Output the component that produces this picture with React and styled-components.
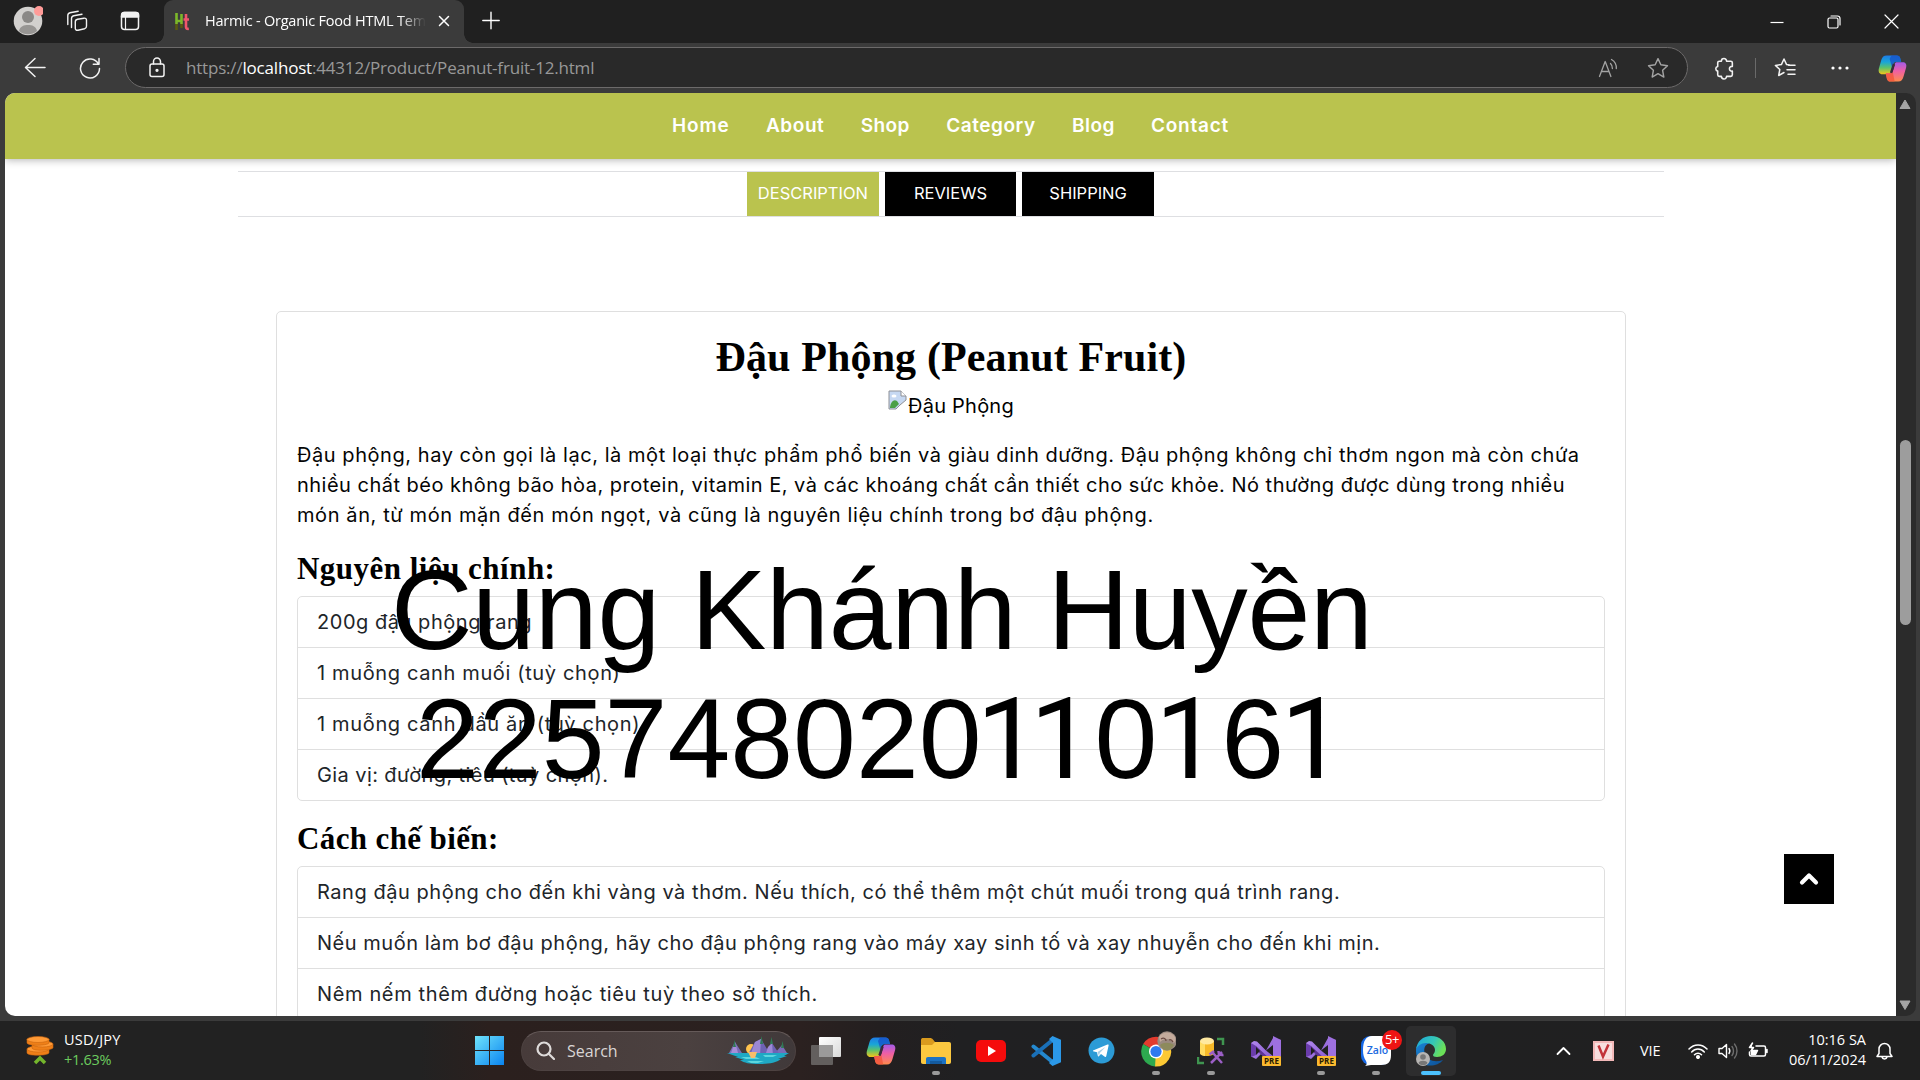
import React from "react";
import styled, { createGlobalStyle } from "styled-components";

const UI = `"Open Sans", "Noto Sans", sans-serif`;
const BODY = `Inter, "Open Sans", sans-serif`;
const HEAD = `"Liberation Serif", serif`;
const GREEN = "#bac34e";

const Global = createGlobalStyle`
  * { box-sizing: border-box; }
  html, body { margin: 0; padding: 0; overflow: hidden; background: #202020; }
  svg { display: block; flex: none; }
`;

const Screen = styled.div`
  width: 1920px;
  height: 1080px;
  display: flex;
  flex-direction: column;
  background: #3b3b3b;
  position: relative;
  overflow: hidden;
`;

/* ---------- browser chrome ---------- */
const TabStrip = styled.div`
  height: 43px;
  flex: none;
  display: flex;
  background: #202020;
  align-items: stretch;
`;
const StripTools = styled.div`
  width: 164px;
  display: flex;
  align-items: center;
  padding: 0 0 2px 13px;
`;
const Spacer = styled.div`
  width: ${(p) => p.$w}px;
  flex: none;
`;
const Grow = styled.div`
  flex: 1;
`;
const BrowserTab = styled.div`
  width: 300px;
  background: #3b3b3b;
  border-radius: 9px 9px 0 0;
  display: flex;
  align-items: center;
  padding: 0 0 1px 11px;
  position: relative;
  &::before, &::after {
    content: "";
    position: absolute;
    bottom: 0;
    width: 9px;
    height: 9px;
  }
  &::before { left: -9px; background: radial-gradient(circle at 0 0, #202020 8.5px, #3b3b3b 9px); }
  &::after { right: -9px; background: radial-gradient(circle at 100% 0, #202020 8.5px, #3b3b3b 9px); }
`;
const TabTitle = styled.div`
  width: 221px;
  margin: 0 12px 0 15px;
  overflow: hidden;
  white-space: nowrap;
  color: #fff;
  font: 14.5px/20px ${UI};
  letter-spacing: -0.22px;
  mask-image: linear-gradient(90deg, #000 88%, transparent 100%);
`;
const WindowButtons = styled.div`
  display: flex;
  align-items: center;
  padding-right: 21px;
  gap: 43px;
`;
const Toolbar = styled.div`
  height: 50px;
  flex: none;
  display: flex;
  align-items: center;
  padding-left: 24px;
`;
const AddressBar = styled.div`
  width: 1563px;
  height: 41px;
  margin-left: 24px;
  margin-top: -1px;
  border: 1px solid #6c6a6a;
  border-radius: 21px;
  background: #292929;
  display: flex;
  align-items: center;
  padding: 0 18px 0 22px;
`;
const Url = styled.div`
  margin-left: 20px;
  color: #989898;
  font: 17px/24px ${UI};
  letter-spacing: -0.19px;
  white-space: nowrap;
  b { color: #fff; font-weight: 400; }
`;
const ToolDivider = styled.div`
  width: 1px;
  height: 20px;
  background: #6a6a6a;
`;

/* ---------- page ---------- */
const Viewport = styled.div`
  height: 923px;
  flex: none;
  display: flex;
  padding-left: 5px;
`;
const Page = styled.main`
  width: 1891px;
  background: #fff;
  border-radius: 10px 0 0 10px;
  overflow: hidden;
  position: relative;
`;
const NavBar = styled.nav`
  height: 66px;
  background: ${GREEN};
  box-shadow: 0 1px 8px rgba(0, 0, 0, 0.3);
  display: flex;
  justify-content: center;
  align-items: center;
  gap: 36.3px;
`;
const NavLink = styled.a`
  color: #fff;
  font: 600 19px/24px ${BODY};
  letter-spacing: ${(p) => p.$ls || 0}px;
`;
const TabsRow = styled.div`
  width: 1426px;
  height: 46px;
  margin: 12px 0 0 232.5px;
  border-top: 1px solid #dedfe2;
  border-bottom: 1px solid #dedfe2;
  display: flex;
  justify-content: center;
  gap: 6px;
`;
const ProductTab = styled.button`
  width: 131.6px;
  border: 0;
  padding: 0 0 2px;
  background: ${(p) => (p.$active ? GREEN : "#000")};
  color: #fff;
  font: 16.5px/24px ${BODY};
  letter-spacing: ${(p) => p.$ls || 0}px;
`;
const Card = styled.section`
  width: 1350px;
  margin: 94px 0 0 271px;
  border: 1px solid #dfdfdf;
  border-radius: 5px;
  padding: 20px 20px 0;
  height: 900px;
`;
const Title = styled.h1`
  margin: 0;
  text-align: center;
  color: #000;
  font: 700 42px/50px ${HEAD};
  letter-spacing: 0.13px;
`;
const ImageFallback = styled.div`
  display: flex;
  justify-content: center;
  margin-top: 8px;
  height: 32px;
  color: #000;
  font: 20px/32px ${BODY};
`;
const Paragraph = styled.p`
  margin: 18px 0 0;
  color: #050505;
  font: 20px/30px ${BODY};
`;
const Line = styled.span`
  display: block;
  white-space: nowrap;
  letter-spacing: ${(p) => p.$ls || 0}px;
`;
const SubTitle = styled.h3`
  margin: ${(p) => p.$top}px 0 0;
  height: 36px;
  color: #000;
  font: 700 31px/36px ${HEAD};
  letter-spacing: ${(p) => p.$ls || 0}px;
`;
const List = styled.ul`
  list-style: none;
  margin: 9px 0 0;
  padding: 0;
  border: 1px solid #dfdfdf;
  border-radius: 5px;
`;
const Item = styled.li`
  height: 51px;
  padding-left: 19px;
  border-bottom: 1px solid #dfdfdf;
  color: #212529;
  font: 20px/50px ${BODY};
  &:last-child { border-bottom: 0; height: 50px; }
`;
const BackToTop = styled.button`
  position: absolute;
  right: 62px;
  top: 761px;
  width: 50px;
  height: 50px;
  border: 0;
  padding: 0;
  background: #000;
  display: flex;
  align-items: center;
  justify-content: center;
`;
const ScrollBar = styled.div`
  width: 20px;
  background: #2b2b2b;
  border-radius: 0 10px 10px 0;
  display: flex;
  flex-direction: column;
  align-items: center;
  padding: 6px 2px 5px 0;
`;
const Thumb = styled.div`
  width: 11px;
  height: 185px;
  border-radius: 6px;
  background: #9d9d9d;
  margin-top: 330px;
`;
const Watermark = styled.div`
  position: absolute;
  left: 391px;
  top: 546px;
  color: #000;
  font: 113px/129px "Liberation Sans", sans-serif;
  white-space: nowrap;
`;
const MarkLine = styled.div`
  padding-left: ${(p) => p.$indent || 0}px;
  letter-spacing: ${(p) => p.$ls || 0}px;
`;
const One = styled.span`
  font-family: Roboto, sans-serif;
  display: inline-block;
  margin-left: ${(p) => p.$pull}px;
  width: ${(p) => p.$w}px;
`;

/* ---------- taskbar ---------- */
const TaskBar = styled.footer`
  height: 59px;
  margin-top: 5px;
  flex: none;
  display: flex;
  align-items: center;
  background: linear-gradient(90deg, #222 0, #222 420px, #2b201e 490px, #2b2120 800px, #231f20 880px, #202022 960px, #202020 100%);
  font-family: ${UI};
`;
const Widget = styled.div`
  width: 475px;
  padding-left: 25px;
  display: flex;
  align-items: center;
`;
const TwoLines = styled.div`
  display: flex;
  flex-direction: column;
  color: #fff;
  font: 14.5px/20px ${UI};
  padding-bottom: 2px;
  letter-spacing: ${(p) => p.$ls || 0}px;
  align-items: ${(p) => (p.$end ? "flex-end" : "flex-start")};
`;
const Gain = styled.span`
  color: #6ccb5f;
  letter-spacing: -0.3px;
`;
const SearchBox = styled.div`
  width: 275px;
  height: 40px;
  margin-left: 17px;
  border-radius: 20px;
  background: linear-gradient(90deg, #473b3a, #4b4140 60%, #40393a);
  border: 1px solid #4d4241;
  border-top-color: #655a59;
  display: flex;
  align-items: center;
  padding: 0 6px 0 14px;
  color: #d9d6d5;
  font: 16px/22px ${UI};
`;
const SearchLabel = styled.span`
  margin-left: 12px;
`;
const Apps = styled.div`
  display: flex;
  margin-left: 5px;
  gap: 5px;
`;
const AppTile = styled.div`
  width: 50px;
  height: 50px;
  border-radius: 5px;
  background: ${(p) => (p.$active ? "#2d2d2e" : "transparent")};
  display: flex;
  align-items: center;
  justify-content: center;
  position: relative;
  &::after {
    content: "";
    display: ${(p) => (p.$running || p.$active ? "block" : "none")};
    position: absolute;
    bottom: 1px;
    width: ${(p) => (p.$active ? 20 : 8)}px;
    height: 4px;
    border-radius: 2px;
    background: ${(p) => (p.$active ? "#4cc2ff" : "#9a9a9a")};
  }
`;
const Badge = styled.span`
  position: absolute;
  right: -1px;
  top: 4px;
  width: 20px;
  height: 20px;
  border-radius: 50%;
  background: #ee1414;
  color: #fff;
  font: 13px/19px ${UI};
  text-align: center;
  letter-spacing: -0.5px;
`;
const Tray = styled.div`
  display: flex;
  align-items: center;
`;
const TrayText = styled.span`
  color: #fff;
  font: 14.5px/20px ${UI};
  width: 21px;
  letter-spacing: -0.1px;
`;

const Stroke = ({ w = 20, h, vb, c = "#f2f2f2", sw = 1.5, children }) => (
  <svg width={w} height={h || w} viewBox={vb || `0 0 ${w} ${h || w}`} fill="none" stroke={c} strokeWidth={sw} strokeLinecap="round" strokeLinejoin="round">
    {children}
  </svg>
);

const Avatar = () => (
  <svg width="30" height="36" viewBox="0 0 30 36">
    <circle cx="15" cy="18" r="14.300" fill="#d2d0ce" />
    <circle cx="15" cy="14" r="6" fill="#8a8886" />
    <path d="M6 28c1-5 5-6 9-6s8 1 9 6a14 14 0 0 1-18 0Z" fill="#979593" />
    <circle cx="26" cy="8" r="5" fill="#ff9b98" />
  </svg>
);
const Workspaces = () => (
  <Stroke w={22} sw={1.4}>
    <path d="M11.500 9.300 18 8.200c1.500-.2 2.500.5 2.500 2v6c0 1.500-.8 2.300-2 2.600l-6.500 1.400c-1.700.3-2.700-.5-2.700-2v-6.400c0-1.300.8-2.200 2.200-2.500Z" />
    <path d="M5.500 17.500V8.500c0-1.500.8-2.400 2.200-2.700l8.300-1.600" />
    <path d="M1.800 14.500V5.500c0-1.500.8-2.400 2.200-2.700l8.200-1.600" />
  </Stroke>
);
const TabPane = () => (
  <Stroke w={20} sw={1.5}>
    <rect x="1.500" y="1.500" width="17" height="17" rx="3" />
    <path d="M2 3.500C2 2 3 1.500 4 1.500h12c1.500 0 2.500.8 2.500 2V6H1.500Z" fill="#f2f2f2" />
    <path d="M5.500 6v12" strokeWidth="1.200" />
  </Stroke>
);
const Favicon = () => (
  <svg width="15" height="19" viewBox="0 0 15 19" fill="none" strokeWidth="2.600">
    <path d="M1.500 1v11M1.500 9h5M6.500 2v10" stroke="#7cb82a" />
    <path d="M1.500 12v6M6.500 12v4" stroke="#5a5a10" />
    <path d="M11 2v13c0 1.500 1 2 2.800 1.800M8.500 7.500H14" stroke="#f0566c" />
  </svg>
);
const Copilot = ({ w, id }) => (
  <svg width={w} height={w} viewBox="0 0 30 30">
    <defs>
      <linearGradient id={`${id}a`} x1="0" y1="0" x2="0" y2="1">
        <stop offset="0" stopColor="#1e7be6" /><stop offset=".35" stopColor="#19a5d8" /><stop offset=".65" stopColor="#5cc26b" /><stop offset="1" stopColor="#f5c518" />
      </linearGradient>
      <linearGradient id={`${id}b`} x1="0" y1="0" x2="0" y2="1">
        <stop offset="0" stopColor="#a35be8" /><stop offset=".45" stopColor="#ee5fa5" /><stop offset="1" stopColor="#ff8a4c" />
      </linearGradient>
    </defs>
    <path d="M14 1.500h5.500c2 0 3 1 3.500 2.800L24 8h-5c-2 0-3 1-3.600 3L13 20l-2 1H4.500C1.500 21 0 18.500.9 15L3.500 6C4.400 3 6 1.500 9 1.500Z" fill={`url(#${id}a)`} />
    <path d="M14 1.500h5.500c2 0 3 1 3.500 2.800L24 8h-5c-2 0-3 1-3.600 3L14.500 14 12 5Z" fill="#1550c8" opacity=".75" />
    <path d="M19 8.500h6.500c3 0 4.500 2 3.600 5.500L26.500 23c-.9 3.500-2.500 5.500-5.500 5.500h-8c-2 0-3.200-1-3.800-3L8 20h4c2 0 3-1 3.600-3l1.500-6c.3-1.500.9-2.500 1.900-2.500Z" fill={`url(#${id}b)`} />
    <path d="M8 20h4c1.500 0 2.500-.6 3.200-2l2 10.500H13c-2 0-3.200-1-3.800-3Z" fill="#f2553a" opacity=".8" />
    <path d="M16.500 10.500 13.500 19.500" stroke="#3a2b3c" strokeWidth="2.500" />
  </svg>
);
const WinLogo = () => (
  <svg width="29" height="29" viewBox="0 0 29 29">
    <defs><linearGradient id="win" x1="0" y1="0" x2="1" y2="1"><stop offset="0" stopColor="#6fe3fb" /><stop offset="1" stopColor="#0a84f0" /></linearGradient></defs>
    <path d="M0 0h14v14H0zM15 0h14v14H15zM0 15h14v14H0zM15 15h14v14H15z" fill="url(#win)" />
  </svg>
);
const Lake = () => (
  <svg width="62" height="30" viewBox="0 0 62 30">
    <circle cx="24" cy="13" r="5" fill="#ffc34d" />
    <path d="M2 17 8 6l7 11ZM48 17l7-8 5 8Z" fill="#7a6cb8" />
    <path d="m8 6 3 11H4Z" fill="#a58fd8" />
    <path d="m20 20 8-14 6-3 6 10 5-6 8 12Z" fill="#6e62b4" />
    <path d="m28 6 6-3-1 17H23ZM41 11l4-4 1 13h-8Z" fill="#9c88d4" />
    <path d="M0 17h62l-5 3h3l-9 3h3c-5 4-12 5-22 5-9 0-15-1-19-4h4L8 21h3Z" fill="#1fa8c4" />
    <path d="M14 21h15l4 2H19ZM36 19h14l-4 2h-8ZM20 25h17l-6 2h-7Z" fill="#5cd6de" />
    <path d="M21 16h9l-2 6h-4Z" fill="#f7bd6b" />
    <path d="m6 11 1.500-7L9 11ZM33 8l1.500-8L36 8ZM43 8l1.500-7L46 8ZM54 12l1.500-7L57 12Z" fill="#2f7a55" />
  </svg>
);
const TaskView = () => (
  <svg width="30" height="28" viewBox="0 0 30 28">
    <defs><linearGradient id="tv" x1="0" y1="0" x2="1" y2="1"><stop offset="0" stopColor="#fff" /><stop offset="1" stopColor="#d9d9d9" /></linearGradient></defs>
    <rect x="8" y="0" width="22" height="20" rx="1" fill="url(#tv)" />
    <rect x="0" y="8" width="22" height="20" rx="1" fill="#6b6867" opacity=".88" />
    <rect x="8" y="8" width="14" height="12" fill="#9b9a9a" />
  </svg>
);
const Folder = () => (
  <svg width="30" height="28" viewBox="0 0 30 28">
    <path d="M0 3C0 1.500 1 1 2 1h7c1.500 0 2 .5 3 1.500L14 5h12v6H0Z" fill="#d99a1e" />
    <path d="M0 8h11l3-3h14c1.300 0 2 .8 2 2v18c0 1.300-.7 2-2 2H2c-1.300 0-2-.7-2-2Z" fill="#fbc840" />
    <path d="M5 27v-5c0-1.300.7-2 2-2h16c1.300 0 2 .7 2 2v5Z" fill="#1b72c4" />
    <path d="M9 24h12v3H9Z" fill="#145a9e" />
  </svg>
);
const YouTube = () => (
  <svg width="30" height="22" viewBox="0 0 30 22">
    <rect width="30" height="22" rx="5" fill="#f50c0c" /><path d="m12 6 8 5-8 5Z" fill="#fff" />
  </svg>
);
const VSCode = () => (
  <svg width="30" height="30" viewBox="0 0 30 30">
    <path d="M2.500 10.500 21 25.500" stroke="#2489d0" strokeWidth="4" strokeLinecap="round" />
    <path d="M2.500 19.500 21 4.500" stroke="#1a70b8" strokeWidth="4" strokeLinecap="round" />
    <path d="m21.500 0 8.500 3.700v22.600L21.500 30 18 27l4-4V7l-4-4Z" fill="#2b98e8" />
  </svg>
);
const Telegram = () => (
  <svg width="27" height="27" viewBox="0 0 27 27">
    <circle cx="13.500" cy="13.500" r="13" fill="#2c9bd6" />
    <path d="m5 13.500 14.500-6c.8-.3 1.300 0 1.100 1L18.300 19c-.2 1-.8 1.100-1.500.7L13 17l-2.200 2.300c-.5.4-.9.2-1-.5L9 15.200l-4-1Z" fill="#fff" />
    <path d="m9.500 15 8-5-5.700 6-.8 3Z" fill="#a9cfe6" />
  </svg>
);
const Chrome = () => (
  <svg width="40" height="40" viewBox="-5 -6 40 40">
    <path d="M15 14.500 2.200 7A15 15 0 0 1 28 7Z" fill="#e33b2e" />
    <path d="M15 14.500 2.200 7A15 15 0 0 0 14 29.500l6.500-11Z" fill="#2da94f" />
    <path d="M15 14.500h0L28 7A15 15 0 0 1 14 29.500Z" fill="#fcc934" />
    <circle cx="15" cy="14.500" r="7" fill="#fff" /><circle cx="15" cy="14.500" r="5.600" fill="#2f7af0" />
    <circle cx="26" cy="4" r="9.700" fill="#9b8a80" />
    <path d="M18 0c3-6 13-6 16 0 1 3 0 5-1 6-4-5-10-5-14-1Z" fill="#c4ab9c" />
    <path d="M19 8c3-3 10-3 14 0-3 7-11 7-14 0Z" fill="#8d8a5c" /><path d="M20 2c3-2 5 0 5 2m3-1c2-1 3 0 4 2" fill="none" stroke="#6b4a42" strokeWidth="1.300" />
  </svg>
);
const Ssms = () => (
  <svg width="28" height="28" viewBox="0 0 28 28">
    <path d="M3 4v12c0 4 14 4 14 0V4Z" fill="#f7b928" /><path d="M3 4v12c0 2 3 3 5 3V6Z" fill="#ffdc62" />
    <ellipse cx="10" cy="4" rx="7" ry="3.500" fill="#ffe9a0" />
    <path d="M20 2h6v6M1 20v6h6" fill="none" stroke="#3f9550" strokeWidth="2.500" />
    <path d="m14 26 11-11M16 16l9 10M12.500 17.500 17 14M21.500 14c0 3 1 4.500 5 4" fill="none" stroke="#9b5fc6" strokeWidth="2.500" />
  </svg>
);
const VisualStudio = ({ id }) => (
  <svg width="30" height="32" viewBox="0 0 30 32">
    <defs><linearGradient id={id} x1="0" y1="0" x2="1" y2="1"><stop offset="0" stopColor="#b48cf0" /><stop offset="1" stopColor="#7a48c4" /></linearGradient></defs>
    <path d="M0 8l3-2 3 .5 9 9L22 3l8 2v22l-8 3-12-11-5 5-5-2.500Z" fill={`url(#${id})`} />
    <path d="M0 8l5 3v9l-5 2Z" fill="#6a3cab" /><path d="m5 11 14 13 3 6L5 15Z" fill="#5d3394" /><path d="M22 10v11l-7-5.500Z" fill="#202020" /><path d="m5 12 4 4-4 4Z" fill="#202020" />
    <path d="M22 1l8 4v16l-8 2Z" fill="#9e70e0" />
    <rect x="11" y="21" width="19" height="10" rx="1" fill="#fbb92f" />
    <text x="20.500" y="29" textAnchor="middle" fontFamily="Open Sans" fontWeight="700" fontSize="8" fill="#2a1c00">PRE</text>
  </svg>
);
const Zalo = () => (
  <svg width="30" height="30" viewBox="0 0 30 30">
    <rect width="29" height="29" rx="9" fill="#1668e8" />
    <path d="M11 0h10c6 0 9 3 9 9v10c0 7-3 10-10 10H10l-6 1c2-1 2-3 1-5-2-3-3-6-3-11C2 5 5 0 11 0Z" fill="#fff" />
    <text x="16.500" y="18" textAnchor="middle" fontFamily="Open Sans" fontWeight="600" fontSize="10.500" fill="#1b6be0">Zalo</text>
  </svg>
);
const Edge = () => (
  <svg width="30" height="30" viewBox="0 0 30 30">
    <defs>
      <linearGradient id="edA" x1="0" y1="0" x2="1" y2=".4"><stop offset="0" stopColor="#1ba6e0" /><stop offset=".6" stopColor="#35c7b6" /><stop offset="1" stopColor="#6be058" /></linearGradient>
      <linearGradient id="edB" x1="0" y1="0" x2="1" y2="1"><stop offset="0" stopColor="#1a86d8" /><stop offset="1" stopColor="#0d4f94" /></linearGradient>
    </defs>
    <path d="M0 15C0 7 7 3 14 7c-5 1-7 6-5 11 2 6 9 9 18 6-7 9-27 8-27-9Z" fill="url(#edB)" />
    <path d="M0 14C1 5 7 0 15 0c9 0 15 6 15 13 0 5-4 8-9 8-3 0-4-1-4-2s2-2 2-5c0-4-4-7-9-7-5 0-9 3-10 7Z" fill="url(#edA)" />
    <circle cx="7" cy="23" r="7" fill="#b7b5b3" /><circle cx="7" cy="21" r="2.800" fill="#777" /><path d="M2.500 27c1-3 8-3 9 0-2 3-7 3-9 0Z" fill="#777" />
  </svg>
);
const Coins = () => (
  <svg width="30" height="30" viewBox="0 0 30 30">
    <g stroke="#c9640f" strokeWidth=".6">
      <path d="M2 13v4c0 3 20 3 22 0v-4Z" fill="#ee7f18" /><ellipse cx="13" cy="13" rx="11" ry="3" fill="#ff9a36" />
      <path d="M7 8v4c0 3 18 3 21 0V8Z" fill="#ee7f18" /><ellipse cx="17.500" cy="8" rx="10.500" ry="3" fill="#ff9a36" />
      <path d="M2 3v4c0 3 20 3 22 0V3Z" fill="#ee7f18" /><ellipse cx="13" cy="3.500" rx="11" ry="3" fill="#ff9a36" />
    </g>
    <path d="m10 27 5-5 5 5" fill="none" stroke="#74b62c" strokeWidth="3.500" />
  </svg>
);
const BrokenImage = () => (
  <svg width="20" height="20" viewBox="0 0 20 20">
    <path d="M1 1h12l5 5v4l-6 5-4 4H1Z" fill="#c6d8f2" stroke="#8e9096" />
    <path d="M2 17c1-6 4-8 7-6l2 3-4 4H2Z" fill="#4ba047" /><path d="M13 1v5h5" fill="#fff" stroke="#8e9096" />
    <ellipse cx="6" cy="6" rx="2.500" ry="1.500" fill="#fff" />
  </svg>
);
const starPath = "m10 1.500 2.600 5.600 6 .8-4.400 4.200 1.100 6.100L10 15.200l-5.300 3 1.100-6.100L1.400 7.900l6-.8Z";

/* text paired with its tracking */
const nav = [["Home", 0.9], ["About", 0.55], ["Shop", 0.45], ["Category", 0.55], ["Blog", 0.45], ["Contact", 0.75]];
const ingredients = [
  ["200g đậu phộng rang", 0.54],
  ["1 muỗng canh muối (tuỳ chọn)", 0.64],
  ["1 muỗng canh dầu ăn (tuỳ chọn)", 0.66],
  ["Gia vị: đường, tiêu (tuỳ chọn).", 0.41],
];
const steps = [
  ["Rang đậu phộng cho đến khi vàng và thơm. Nếu thích, có thể thêm một chút muối trong quá trình rang.", 0.545],
  ["Nếu muốn làm bơ đậu phộng, hãy cho đậu phộng rang vào máy xay sinh tố và xay nhuyễn cho đến khi mịn.", 0.53],
  ["Nêm nếm thêm đường hoặc tiêu tuỳ theo sở thích.", 0.63],
];
const paragraph = [
  ["Đậu phộng, hay còn gọi là lạc, là một loại thực phẩm phổ biến và giàu dinh dưỡng. Đậu phộng không chỉ thơm ngon mà còn chứa", 0.555],
  ["nhiều chất béo không bão hòa, protein, vitamin E, và các khoáng chất cần thiết cho sức khỏe. Nó thường được dùng trong nhiều", 0.485],
  ["món ăn, từ món mặn đến món ngọt, và cũng là nguyên liệu chính trong bơ đậu phộng.", 0.6],
];

export default function App() {
  return (
    <Screen>
      <Global />
      <TabStrip>
        <StripTools>
          <Avatar />
          <Spacer $w={23} />
          <Workspaces />
          <Spacer $w={32} />
          <TabPane />
        </StripTools>
        <BrowserTab>
          <Favicon />
          <TabTitle>Harmic - Organic Food HTML Template</TabTitle>
          <Stroke w={12} c="#fff"><path d="m1.500 1.500 9 9m0-9-9 9" /></Stroke>
        </BrowserTab>
        <Spacer $w={18} />
        <Stroke w={18} h={42} c="#fff" sw={1.4}><path d="M.8 20.500h16.400M9 12.300v16.400" /></Stroke>
        <Grow />
        <WindowButtons>
          <Stroke w={14} c="#fff" sw={1.2}><path d="M.5 7.500h13" strokeLinecap="butt" /></Stroke>
          <Stroke w={14} c="#fff" sw={1.2}><rect x="1" y="3" width="10" height="10" rx="1.500" /><path d="M4 1h6.500C12.500 1 13 2 13 3.500V10" /></Stroke>
          <Stroke w={15} c="#fff" sw={1.2}><path d="m1 1 13 13m0-13L1 14" /></Stroke>
        </WindowButtons>
      </TabStrip>

      <Toolbar>
        <Stroke w={22}><path d="M21 10.500H2m9-9-9.500 9 9.500 9" /></Stroke>
        <Spacer $w={33} />
        <Stroke w={22}><path d="M19.400 7A9.500 9.500 0 1 0 20.500 11.500M20 1.500v5.700h-5.700" /></Stroke>
        <AddressBar>
          <Stroke w={18} h={21}><rect x="2" y="7" width="14" height="12.500" rx="2" /><path d="M5.500 7V4.500a3.500 3.500 0 0 1 7 0V7" /><circle cx="9" cy="13.300" r=".9" fill="#fff" /></Stroke>
          <Url>https://<b>localhost</b>:44312/Product/Peanut-fruit-12.html</Url>
          <Grow />
          <Stroke w={20} c="#a3a3a3" sw={1.3}><path d="m1.500 18.500 5.700-15 5.700 15M3.500 13.500h7.300M12.500 5.500c1.500 1.500 2 3 1.900 5M13.500 1.500c3.500 2 5 5.500 4.800 9" /></Stroke>
          <Spacer $w={29} />
          <Stroke w={22} vb="0 0 20 20" c="#a3a3a3" sw={1.3}><path d={starPath} /></Stroke>
        </AddressBar>
        <Spacer $w={25} />
        <Stroke w={23} vb="0 0 22 22"><path d="M8 4a2.500 2.500 0 0 1 5 0h4c1 0 1.500.5 1.500 1.500V9a2.300 2.300 0 1 0 0 4.500v3.500c0 1-.5 1.500-1.500 1.500h-4a2.500 2.500 0 0 1-5 0H6c-1 0-1.500-.5-1.500-1.500v-3.500a2.300 2.300 0 0 1 0-4.500V5.500c0-1 .5-1.500 1.500-1.500Z" /></Stroke>
        <Spacer $w={19} />
        <ToolDivider />
        <Spacer $w={18} />
        <Stroke w={22} vb="0 0 22 21"><path d="M10 15l-5.300 3 1.100-6L1.400 7.900l6-.8L10 1.500l2.600 5.600 3 .4M14.500 7.800H21M13 12.300h8M14 16.800h7" /></Stroke>
        <Spacer $w={34} />
        <svg width="20" height="6"><circle cx="3" cy="3" r="1.600" fill="#fff" /><circle cx="10" cy="3" r="1.600" fill="#fff" /><circle cx="17" cy="3" r="1.600" fill="#fff" /></svg>
        <Spacer $w={28} />
        <Copilot w={29} id="cpt" />
      </Toolbar>

      <Viewport>
        <Page>
          <NavBar>{nav.map(([t, ls]) => <NavLink key={t} $ls={ls}>{t}</NavLink>)}</NavBar>
          <TabsRow>
            <ProductTab $active>DESCRIPTION</ProductTab>
            <ProductTab>REVIEWS</ProductTab>
            <ProductTab>SHIPPING</ProductTab>
          </TabsRow>
          <Card>
            <Title>Đậu Phộng (Peanut Fruit)</Title>
            <ImageFallback><BrokenImage /><Line $ls={0.22}>Đậu Phộng</Line></ImageFallback>
            <Paragraph>{paragraph.map(([t, ls]) => <Line key={t} $ls={ls}>{t}</Line>)}</Paragraph>
            <SubTitle $top={21} $ls={0.48}>Nguyên liệu chính:</SubTitle>
            <List>{ingredients.map(([t, ls]) => <Item key={t}><Line $ls={ls}>{t}</Line></Item>)}</List>
            <SubTitle $top={20} $ls={0.38}>Cách chế biến:</SubTitle>
            <List>{steps.map(([t, ls]) => <Item key={t}><Line $ls={ls}>{t}</Line></Item>)}</List>
          </Card>
          <BackToTop>
            <Stroke w={24} c="#fff" sw={4.2}><path d="m5 15.500 7-7 7 7" /></Stroke>
          </BackToTop>
        </Page>
        <ScrollBar>
          <svg width="12" height="11"><path d="M6 1 11 9.500H1Z" fill="#a5a5a5" stroke="#a5a5a5" strokeLinejoin="round" /></svg>
          <Thumb />
          <Grow />
          <svg width="12" height="11"><path d="M6 9.500 11 1H1Z" fill="#a5a5a5" stroke="#a5a5a5" strokeLinejoin="round" /></svg>
        </ScrollBar>
      </Viewport>

      <TaskBar>
        <Widget>
          <Coins />
          <Spacer $w={9} />
          <TwoLines $ls={0.2}><span>USD/JPY</span><Gain>+1.63%</Gain></TwoLines>
        </Widget>
        <WinLogo />
        <SearchBox>
          <Stroke w={19} c="#dedbda" sw={2.2}><circle cx="8" cy="8" r="6.500" /><path d="m13 13 5 5" /></Stroke>
          <SearchLabel>Search</SearchLabel>
          <Grow />
          <Lake />
        </SearchBox>
        <Apps>
          <AppTile><TaskView /></AppTile>
          <AppTile><Copilot w={30} id="cpb" /></AppTile>
          <AppTile $running><Folder /></AppTile>
          <AppTile><YouTube /></AppTile>
          <AppTile><VSCode /></AppTile>
          <AppTile><Telegram /></AppTile>
          <AppTile $running><Chrome /></AppTile>
          <AppTile $running><Ssms /></AppTile>
          <AppTile><VisualStudio id="vs1" /></AppTile>
          <AppTile $running><VisualStudio id="vs2" /></AppTile>
          <AppTile $running><Zalo /><Badge>5+</Badge></AppTile>
          <AppTile $active><Edge /></AppTile>
        </Apps>
        <Grow />
        <Tray>
          <Stroke w={15} h={10} c="#fff" sw={1.8}><path d="m1.500 8 6-6 6 6" /></Stroke>
          <Spacer $w={22} />
          <svg width="21" height="20" viewBox="0 0 21 20"><rect width="21" height="20" fill="#f3b9b9" /><rect x="2" y="2" width="17" height="16" fill="#f7dede" /><path d="m5.500 4.500 4.500 11 5.500-12" fill="none" stroke="#c2333a" strokeWidth="2.500" /></svg>
          <Spacer $w={26} />
          <TrayText>VIE</TrayText>
          <Spacer $w={27} />
          <Stroke w={20} h={16} c="#fff" sw={1.5}><path d="M1 6c5-5.500 13-5.500 18 0M3.700 9c3.500-4 9-4 12.600 0M6.500 11.800c2-2.200 5-2.200 7 0" /><circle cx="10" cy="14" r="1.300" fill="#fff" /></Stroke>
          <Spacer $w={10} />
          <Stroke w={20} h={18} c="#fff" sw={1.4}><path d="M1 6.500v5h3l4.500 4v-13L4 6.500ZM11 6.500c1 1.500 1 3.500 0 5" /><path d="M14 4.500c2 2.500 2 6.500 0 9M16.500 2c3.300 4 3.300 10 0 14" stroke="#6d6d6d" /></Stroke>
          <Spacer $w={10} />
          <Stroke w={20} h={18} c="#fff" sw={1.5}><path d="M8 4h8c1 0 1.500.5 1.500 1.500v7c0 1-.5 1.500-1.500 1.500H3c-1 0-1.500-.5-1.500-1.500V10M19 7.500v3" /><path d="M3.500 8.500h6l-2 4h-4Z" fill="#fff" /><path d="M4.500 1 1.500 5.500h4L3 9" fill="#fff" /></Stroke>
          <Spacer $w={21} />
          <TwoLines $end><span>10:16 SA</span><span>06/11/2024</span></TwoLines>
          <Spacer $w={10} />
          <Stroke w={17} h={20} c="#fff" sw={1.5}><path d="M3 12.500V8a5.500 5.500 0 0 1 11 0v4.500l2 3H1ZM6 16c.5 2.500 4.500 2.500 5 0" /></Stroke>
          <Spacer $w={27} />
        </Tray>
      </TaskBar>

      <Watermark>
        <MarkLine $ls={-0.3}>Cung Khánh Huyền</MarkLine>
        <MarkLine $indent={25}>
          225748020<One $pull={-5} $w={53.5}>1</One><One $pull={0} $w={64.4}>1</One>0<One $pull={-2} $w={66}>1</One>6<One $pull={-3.5} $w={63}>1</One>
        </MarkLine>
      </Watermark>
    </Screen>
  );
}
